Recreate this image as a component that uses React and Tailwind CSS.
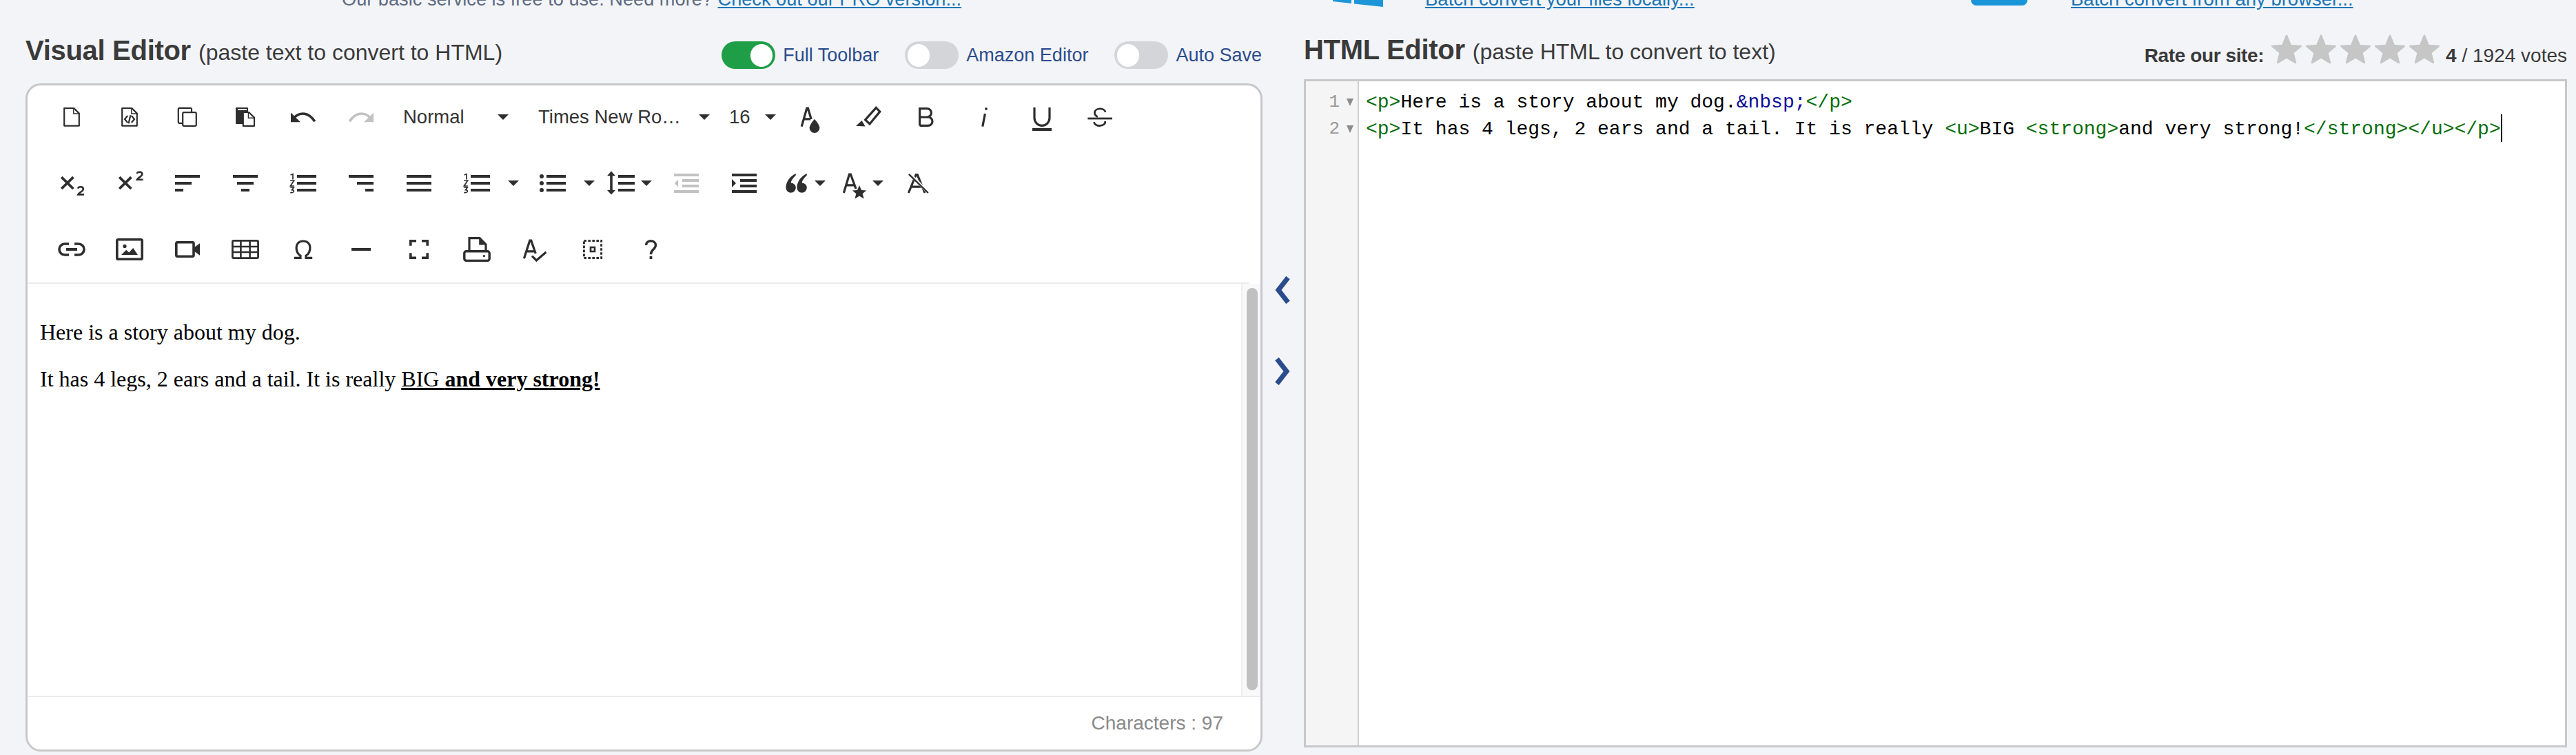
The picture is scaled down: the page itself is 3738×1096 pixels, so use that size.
const INK = '#2e2e2e'
const BLUE = '#2b4c8c'

function Ico({ children, color = INK }) {
    return (
        <svg viewBox="0 0 24 24" className="w-12 h-12 shrink-0" fill={color} stroke="none" style={{ color }}>
            {children}
        </svg>
    )
}

const line = { fill: 'none', stroke: 'currentColor', strokeWidth: 1.1 }
const thick = { fill: 'none', stroke: 'currentColor', strokeWidth: 1.6 }

const Bars = ({ x = [[3, 21], [3, 21], [3, 21]] }) => (
    <>
        <rect x={x[0][0]} y="6" width={x[0][1] - x[0][0]} height="2" />
        <rect x={x[1][0]} y="11" width={x[1][1] - x[1][0]} height="2" />
        <rect x={x[2][0]} y="16" width={x[2][1] - x[2][0]} height="2" />
    </>
)

const Digits = () => (
    <g fill="none" stroke="currentColor" strokeWidth="0.85">
        <path d="M2.8 6 L4.5 5.4 V9.2" />
        <path d="M2.6 10 H5.3 L2.7 14 H5.4" />
        <path d="M2.6 15 H5.2 L3.8 16.8 C5.8 16.8 5.8 19.2 2.6 18.8" />
    </g>
)

const ICONS = {
    doc: (
        <>
            <path d="M6.6 5.5 H13.6 L17.4 9.3 V18.3 H6.6 Z" {...line} strokeLinejoin="round" />
            <path d="M13.4 5.5 V9.5 H17.4" {...line} strokeWidth="0.7" />
        </>
    ),
    code: (
        <>
            <path d="M6.6 5.5 H13.6 L17.4 9.3 V18.3 H6.6 Z" {...line} strokeLinejoin="round" />
            <path d="M13.4 5.5 V9.5 H17.4" {...line} strokeWidth="0.7" />
            <path d="M10.6 11 L8.5 13.5 L10.6 16 M13.4 11 L15.5 13.5 L13.4 16 M12.7 10.6 L11.3 16.6" {...line} />
        </>
    ),
    copy: (
        <>
            <path d="M8.5 16.4 H6.2 A0.8 0.8 0 0 1 5.4 15.6 V6.2 A0.8 0.8 0 0 1 6.2 5.4 H14 A0.8 0.8 0 0 1 15 6.2 V8.4" {...line} />
            <rect x="8.6" y="8.6" width="9.8" height="9.8" rx="0.9" {...line} />
        </>
    ),
    paste: (
        <>
            <path d="M5.6 5 H13.4 A0.6 0.6 0 0 1 14 5.6 V17 H5.6 A0.6 0.6 0 0 1 5 16.4 V5.6 A0.6 0.6 0 0 1 5.6 5 Z" />
            <rect x="6.5" y="6" width="6.5" height="0.9" fill="#fff" />
            <path d="M10.4 8.5 H14.6 L18.5 12.4 V18.4 H10.4 Z" fill="#fff" stroke="currentColor" strokeWidth="1.1" strokeLinejoin="round" />
            <path d="M14.2 8.5 V12.6 H18.5" {...line} strokeWidth="0.7" />
        </>
    ),
    undo: (
        <>
            <path d="M3 8.7 V15.6 H10 Z" />
            <path d="M5.4 12.4 C10 7.8 16.3 8.6 20.4 15.2" {...thick} strokeWidth="1.8" />
        </>
    ),
    redo: (
        <>
            <path d="M21 8.7 V15.6 H14 Z" />
            <path d="M18.6 12.4 C14 7.8 7.7 8.6 3.6 15.2" {...thick} strokeWidth="1.8" />
        </>
    ),
    fill: (
        <>
            <path d="M5.6 18.8 L9.4 5.6 H10.2 L12.6 13.5 M7 13.4 H12" {...thick} />
            <path d="M15 13.5 C15 13.5 18.7 17.5 18.7 19.8 A3.7 3.7 0 0 1 11.3 19.8 C11.3 17.5 15 13.5 15 13.5 Z" />
        </>
    ),
    marker: (
        <>
            <path d="M17.6 5.2 L20.4 8 L13 17 L9.8 14 Z" {...thick} />
            <path d="M3 18.4 L7.3 14.5 L9.8 18.8 Z" />
        </>
    ),
    bold: (
        <path d="M7.3 18.2 V5.8 H12.6 A3.1 3.1 0 0 1 12.6 12 H7.3 M12.6 12 H13.4 A3.1 3.1 0 0 1 13.4 18.2 H7.3" {...thick} />
    ),
    italic: (
        <>
            <circle cx="13.5" cy="6" r="0.95" />
            <path d="M12.7 9.5 L10.9 18.8" {...thick} />
        </>
    ),
    underline: (
        <>
            <path d="M6.5 5 V12.5 A5.5 5.7 0 0 0 17.5 12.5 V5" {...thick} />
            <rect x="5" y="20" width="14" height="2" />
        </>
    ),
    strike: (
        <>
            <rect x="3.2" y="12.3" width="17.8" height="1.4" />
            <path d="M16 8.4 C15.6 5.2 8.4 5 8.2 8.8 C8.2 10.2 9 11.2 10.4 11.8 M15.8 15 C16.6 18.8 8.4 19.6 7.8 15.6" {...thick} strokeWidth="1.4" />
        </>
    ),
    sub: (
        <>
            <path d="M4.6 7.6 L13.2 16 M13.2 7.6 L4.6 16" {...thick} strokeWidth="1.9" />
            <path d="M16.6 15.8 C17 14.2 20.4 14.2 20.4 16.2 C20.4 17.8 17.2 18.8 16.6 20.2 H21" {...thick} strokeWidth="1.3" />
        </>
    ),
    sup: (
        <>
            <path d="M4.6 7.6 L13.2 16 M13.2 7.6 L4.6 16" {...thick} strokeWidth="1.9" />
            <path d="M17.4 5 C17.8 3.4 21.2 3.4 21.2 5.4 C21.2 7 18 8 17.4 9.4 H21.8" {...thick} strokeWidth="1.3" />
        </>
    ),
    left: <Bars x={[[3, 21], [3, 15], [3, 9]]} />,
    center: <Bars x={[[3, 21], [6, 18], [9, 15]]} />,
    right: <Bars x={[[3, 21], [9, 21], [15, 21]]} />,
    justify: <Bars />,
    numbered: (
        <>
            <Digits />
            <Bars x={[[7.5, 21.5], [7.5, 21.5], [7.5, 21.5]]} />
        </>
    ),
    bullets: (
        <>
            <circle cx="4" cy="7" r="1.5" />
            <circle cx="4" cy="12" r="1.5" />
            <circle cx="4" cy="17" r="1.5" />
            <Bars x={[[7.5, 21.5], [7.5, 21.5], [7.5, 21.5]]} />
        </>
    ),
    lineHeight: (
        <>
            <path d="M3.5 3.3 L6.5 6.6 H4.4 V17 H6.5 L3.5 20.3 L0.5 17 H2.6 V6.6 H0.5 Z" />
            <Bars x={[[8.5, 20.5], [8.5, 20.5], [8.5, 20.5]]} />
        </>
    ),
    outdent: (
        <>
            <rect x="3" y="5" width="18" height="2" />
            <rect x="9" y="9" width="12" height="2" />
            <rect x="9" y="13" width="12" height="2" />
            <rect x="3" y="17" width="18" height="2" />
            <path d="M6 9.3 V14.7 L3.4 12 Z" />
        </>
    ),
    indent: (
        <>
            <rect x="3" y="5" width="18" height="2" />
            <rect x="9" y="9" width="12" height="2" />
            <rect x="9" y="13" width="12" height="2" />
            <rect x="3" y="17" width="18" height="2" />
            <path d="M3 9 V15 L6 12 Z" />
        </>
    ),
    quote: (
        <>
            <path d="M11.4 5 C7 7 4.2 11 4.2 15.3 A3.6 3.6 0 1 0 7.8 11.7 C8 10 9.5 8 11.4 6.2 Z" />
            <path d="M19.4 5 C15 7 12.2 11 12.2 15.3 A3.6 3.6 0 1 0 15.8 11.7 C16 10 17.5 8 19.4 6.2 Z" />
        </>
    ),
    inlineStyle: (
        <>
            <path d="M4.2 19 L8.2 5.6 H9.2 L13 16 M6 13.4 H11.5" {...thick} />
            <path d="M15.5 13.5 L17 17 L20.6 17.2 L17.8 19.6 L18.8 23.2 L15.5 21.2 L12.2 23.2 L13.2 19.6 L10.4 17.2 L14 17 Z" />
        </>
    ),
    clear: (
        <>
            <path d="M5.2 19 L10.6 5.8 H11.6 L17 19 M7.4 14.6 H15" {...thick} />
            <path d="M5.6 4.8 L19.4 18.6" fill="none" stroke="#fff" strokeWidth="2.2" />
            <path d="M5.4 5.4 L19.4 19" {...line} strokeWidth="1.2" />
        </>
    ),
    link: (
        <>
            <path d="M10 8 H7 A4 4 0 0 0 7 16 H10 M14 8 H17 A4 4 0 0 1 17 16 H14" {...thick} strokeWidth="1.8" />
            <rect x="8" y="11" width="8" height="2" />
        </>
    ),
    image: (
        <>
            <rect x="2.9" y="4.9" width="18.2" height="14.2" rx="0.9" {...thick} strokeWidth="1.8" />
            <circle cx="8.5" cy="9.7" r="1.3" />
            <path d="M6 16 L9.6 12.4 L11.6 14.2 L14.6 11 L18 16 Z" />
        </>
    ),
    video: (
        <>
            <rect x="3.9" y="6.9" width="12.6" height="10.2" rx="0.8" {...thick} strokeWidth="1.8" />
            <path d="M17 10.5 L21 7.6 V16.4 L17 13.5 Z" />
        </>
    ),
    table: (
        <>
            <rect x="2.7" y="5.7" width="18.6" height="12.6" rx="0.9" {...thick} strokeWidth="1.4" />
            <path d="M8.7 5.7 V18.3 M15.3 5.7 V18.3 M2.7 10 H21.3 M2.7 14 H21.3" {...line} strokeWidth="1.3" />
        </>
    ),
    omega: (
        <path d="M5.4 18.2 H10 V16.6 C6 14.5 5.5 6 12 6 C18.5 6 18 14.5 14 16.6 V18.2 H18.6" {...thick} />
    ),
    hr: <rect x="5" y="11" width="14" height="2" />,
    fullscreen: (
        <path d="M5.9 9.4 V5.9 H10 M14 5.9 H18.1 V9.4 M18.1 14.6 V18.1 H14 M10 18.1 H5.9 V14.6" {...thick} strokeWidth="1.8" />
    ),
    print: (
        <>
            <path d="M6.5 13 V3.8 H14 L18.5 8.4 V13" {...thick} />
            <path d="M13.6 3.6 L18.8 8.8 H13.6 Z" />
            <rect x="2.9" y="13.4" width="18.2" height="6.8" rx="1.4" {...thick} strokeWidth="1.7" />
            <circle cx="17.2" cy="16.8" r="0.85" />
        </>
    ),
    spell: (
        <>
            <path d="M4.2 18.6 L8.4 5.6 H9.4 L12.6 15 M6 13.4 H11.4" {...thick} />
            <path d="M10 16.8 L13.2 20 L20.2 14" {...thick} />
        </>
    ),
    selectAll: (
        <>
            <rect x="5.7" y="5.7" width="12.6" height="12.6" {...thick} strokeWidth="1.5" strokeDasharray="1.8 1.2" />
            <rect x="10.5" y="10.5" width="3" height="3" {...thick} strokeWidth="1.3" />
        </>
    ),
    help: (
        <>
            <path d="M8.8 9 C8.8 4.8 15.7 4.8 15.7 9 C15.7 12 12.2 12 12.2 15.6" {...thick} strokeWidth="1.7" />
            <rect x="11.3" y="17" width="1.9" height="2" />
        </>
    ),
}

function Tool({ name, muted }) {
    return (
        <div className="w-[84px] h-[96px] shrink-0 flex items-center justify-center">
            <Ico color={muted ? '#c2c2c2' : INK}>{ICONS[name]}</Ico>
        </div>
    )
}

function Caret() {
    return <span className="block w-0 h-0 border-x-[8px] border-t-[8px] border-x-transparent border-t-[#2e2e2e]" />
}

// icon + caret: lists are wider than the others
function ToolDrop({ name, wide }) {
    return (
        <div className={`h-[96px] shrink-0 flex items-center ${wide ? 'w-[110px] pl-[18px]' : 'w-[84px] pl-[10px]'}`}>
            <Ico>{ICONS[name]}</Ico>
            <span className={wide ? 'ml-[21px]' : 'ml-[2px]'}>
                <Caret />
            </span>
        </div>
    )
}

function Select({ label, className }) {
    return (
        <div className={`h-[96px] shrink-0 flex items-center justify-between text-[27.5px] text-[#333] ${className}`}>
            <span>{label}</span>
            <Caret />
        </div>
    )
}

function Toggle({ on, label }) {
    return (
        <div className="flex items-center">
            <div className={`w-[78px] h-[40px] rounded-full flex items-center px-[4px] ${on ? 'bg-[#1f9e48] justify-end' : 'bg-[#d4d5d9]'}`}>
                <span className="block w-[32px] h-[33px] rounded-full bg-white" />
            </div>
            <span className="ml-[11px] text-[27px] text-[#2b4c8c]">{label}</span>
        </div>
    )
}

function Star() {
    return (
        <svg viewBox="0 0 24 24" className="w-[50px] h-[46px] shrink-0" fill="#c6c6c6" stroke="#c6c6c6" strokeWidth="1.4" strokeLinejoin="round">
            <path d="M12 2 L15 9.4 L22.8 9.9 L16.8 14.9 L18.7 22.4 L12 18.3 L5.3 22.4 L7.2 14.9 L1.2 9.9 L9 9.4 Z" />
        </svg>
    )
}

function Chevron({ flip }) {
    return (
        <svg viewBox="0 0 22 40" className={`w-[22px] h-[40px] ${flip ? 'rotate-180' : ''}`} fill="none" stroke={BLUE} strokeWidth="7">
            <path d="M19 2 L5 20 L19 38" />
        </svg>
    )
}

function FoldMark() {
    return <span className="block w-0 h-0 border-x-[5px] border-t-[11px] border-x-transparent border-t-[#8c8c8c]" />
}

function Tag({ children }) {
    return <span className="text-[#076e0c]">{children}</span>
}

const SOURCE_LINES = [
    <>
        <Tag>{'<p>'}</Tag>Here is a story about my dog.<span className="text-[#0d0d96]">&amp;nbsp;</span><Tag>{'</p>'}</Tag>
    </>,
    <>
        <Tag>{'<p>'}</Tag>It has 4 legs, 2 ears and a tail. It is really <Tag>{'<u>'}</Tag>BIG <Tag>{'<strong>'}</Tag>and very strong!<Tag>{'</strong></u></p>'}</Tag>
        <span className="inline-block w-[2px] h-[40px] bg-black align-middle -mt-[3px]" />
    </>,
]

export default function App() {
    return (
        <div className="w-[3738px] h-[1096px] overflow-hidden bg-[#f3f4f8] font-['Liberation_Sans',Arial,sans-serif]">

            {/* promo strip, cut off by the top of the shot */}
            <div className="h-[15px] overflow-hidden flex items-end text-[27.5px] leading-[32px] whitespace-nowrap">
                <div className="w-[1934px] pl-[496px] shrink-0 text-[27.2px] text-[#5d6b80]">
                    Our basic service is free to use. Need more? <span className="text-[#1a75b5] underline">Check out our PRO version...</span>
                </div>
                <svg viewBox="0 0 73 10" className="w-[73px] h-[10px] shrink-0 self-start" fill="#1c96d8">
                    <path d="M0 0 H27 V5 L0 2 Z M31 0 H73 V10 L31 5.5 Z" />
                </svg>
                <div className="w-[61px] shrink-0" />
                <div className="w-[792px] shrink-0 text-[#1a75b5] underline">Batch convert your files locally...</div>
                <div className="w-[82px] h-[8px] shrink-0 self-start bg-[#1a95d8] rounded-b-[16px]" />
                <div className="ml-[63px] text-[#1a75b5] underline">Batch convert from any browser...</div>
            </div>

            <div className="flex pl-[37px] pr-[13px]">

                {/* Visual editor */}
                <div className="w-[1795px] shrink-0">
                    <div className="h-[106px] flex items-start justify-between">
                        <h2 className="mt-[35px] text-[40px] leading-[46px] text-[#3a3a3a] whitespace-nowrap">
                            <b className="tracking-[-0.3px]">Visual Editor</b>{' '}
                            <span className="text-[32px]">(paste text to convert to HTML)</span>
                        </h2>
                        <div className="flex items-center gap-[38px] pr-[1px] mt-[45px]">
                            <Toggle on label="Full Toolbar" />
                            <Toggle label="Amazon Editor" />
                            <Toggle label="Auto Save" />
                        </div>
                    </div>

                    <div className="h-[970px] bg-white border-[3px] border-[#c8c8c8] rounded-[22px] flex flex-col overflow-hidden">
                        <div className="-mt-[2px] pl-[22px] border-b-2 border-[#ebebeb] mr-[16px]">
                            <div className="flex">
                                <Tool name="doc" />
                                <Tool name="code" />
                                <Tool name="copy" />
                                <Tool name="paste" />
                                <Tool name="undo" />
                                <Tool name="redo" muted />
                                <Select label="Normal" className="w-[200px] pl-[19px] pr-[28px]" />
                                <Select label="Times New Ro…" className="w-[280px] pl-[15px] pr-[16px]" />
                                <Select label="16" className="w-[88px] pl-[12px] pr-[8px]" />
                                <Tool name="fill" />
                                <Tool name="marker" />
                                <Tool name="bold" />
                                <Tool name="italic" />
                                <Tool name="underline" />
                                <Tool name="strike" />
                            </div>
                            <div className="flex">
                                <Tool name="sub" />
                                <Tool name="sup" />
                                <Tool name="left" />
                                <Tool name="center" />
                                <Tool name="numbered" />
                                <Tool name="right" />
                                <Tool name="justify" />
                                <ToolDrop name="numbered" wide />
                                <ToolDrop name="bullets" wide />
                                <ToolDrop name="lineHeight" />
                                <Tool name="outdent" muted />
                                <Tool name="indent" />
                                <ToolDrop name="quote" />
                                <ToolDrop name="inlineStyle" />
                                <Tool name="clear" />
                            </div>
                            <div className="flex">
                                <Tool name="link" />
                                <Tool name="image" />
                                <Tool name="video" />
                                <Tool name="table" />
                                <Tool name="omega" />
                                <Tool name="hr" />
                                <Tool name="fullscreen" />
                                <Tool name="print" />
                                <Tool name="spell" />
                                <Tool name="selectAll" />
                                <Tool name="help" />
                            </div>
                        </div>

                        <div className="flex-1 flex min-h-0">
                            <div className="flex-1 pl-[18px] pt-[52px] font-['Liberation_Serif',serif] text-[32px] leading-[36px] text-black">
                                <p>Here is a story about my dog.</p>
                                <p className="mt-[32px]">
                                    It has 4 legs, 2 ears and a tail. It is really{' '}
                                    <u>BIG <strong>and very strong!</strong></u>
                                </p>
                            </div>
                            <div className="w-[28px] shrink-0 bg-[#f9f9f9] border-l-2 border-[#eeeeee] pl-[6px] pt-[6px] pb-[8px]">
                                <div className="w-[16px] h-full rounded-full bg-[#c0c0c0]" />
                            </div>
                        </div>

                        <div className="h-[78px] shrink-0 border-t-2 border-[#ebebeb] flex items-center justify-end pr-[54px] text-[28px] text-[#8a8a8a]">
                            Characters : 97
                        </div>
                    </div>
                </div>

                {/* swap arrows */}
                <div className="w-[60px] shrink-0 flex flex-col items-center pt-[386px] gap-[78px] pr-[3px]">
                    <Chevron />
                    <Chevron flip />
                </div>

                {/* HTML editor */}
                <div className="flex-1 min-w-0">
                    <div className="h-[100px] flex justify-between">
                        <h2 className="text-[40px] text-[#3a3a3a] whitespace-nowrap pt-[34px] leading-[46px]">
                            <b className="tracking-[-0.3px]">HTML Editor</b>{' '}
                            <span className="text-[32px]">(paste HTML to convert to text)</span>
                        </h2>
                        <div className="flex items-center h-[46px] mt-[43px] text-[28px] text-[#3a3a3a] whitespace-nowrap">
                            <b className="tracking-[-0.4px]">Rate our site:</b>
                            <div className="flex ml-[8px] -mt-[20px]">
                                <Star /><Star /><Star /><Star /><Star />
                            </div>
                            <span className="ml-[6px]"><b>4</b> / 1924 votes</span>
                        </div>
                    </div>

                    <div className="h-[970px] bg-white border-[3px] border-[#c8c8c8] flex">
                        <div className="w-[77px] shrink-0 bg-[#f5f5f5] border-r-2 border-[#d0d0d0] pt-[11px] font-['Liberation_Mono',monospace] text-[26px] leading-[39px] text-[#9a9a9a]">
                            {SOURCE_LINES.map((_, i) => (
                                <div key={i} className="flex items-center justify-end pr-[6px] h-[39px]">
                                    <span>{i + 1}</span>
                                    <span className="ml-[10px]"><FoldMark /></span>
                                </div>
                            ))}
                        </div>
                        <div className="flex-1 pl-[10px] pt-[11px] font-['Liberation_Mono',monospace] text-[28px] leading-[39px] text-black whitespace-pre">
                            {SOURCE_LINES.map((l, i) => (
                                <div key={i} className="h-[39px]">{l}</div>
                            ))}
                        </div>
                    </div>
                </div>
            </div>
        </div>
    )
}
